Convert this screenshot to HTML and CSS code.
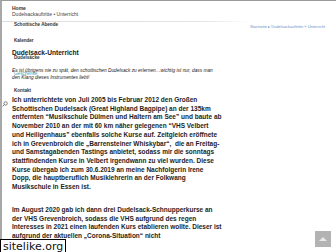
FILE: index.html
```html
<!DOCTYPE html>
<html lang="de">
<head>
  <meta charset="UTF-8">
  <meta name="viewport" content="width=device-width, initial-scale=1.0">
  <title>Dudelsack-Unterricht</title>
  <link rel="stylesheet" href="styles.css">
</head>
<body>
  <div class="site-head">
    <div class="home">Home</div>
    <div class="site-title">Dudelsackauftritte • Unterricht</div>
  </div>
  <div class="rule"></div>

  <ul class="menu">
    <li>Schottische Abende</li>
    <li>Kalender</li>
    <li>Dudelsäcke</li>
    <li class="teal">Geschenke</li>
    <li>Kontakt</li>
  </ul>

  <div class="crumbs">
    <span>Startseite</span> &#9656; <span>Dudelsackauftritte » Unterricht</span>
  </div>

  <div class="content">
    <h1>Dudelsack-Unterricht</h1>
    <p class="intro">Es ist übrigens nie zu spät, den schottischen Dudelsack zu erlernen…wichtig ist nur, dass man den Klang dieses Instrumentes liebt!</p>
    <p>Ich unterrichtete von Juli 2005 bis Februar 2012 den Großen Schottischen Dudelsack (Great Highland Bagpipe) an der 135km entfernten “Musikschule Dülmen und Haltern am See” und baute ab November 2010 an der mit 60 km näher gelegenen “VHS Velbert und Heiligenhaus” ebenfalls solche Kurse auf. Zeitgleich eröffnete ich in Grevenbroich die „Barrensteiner Whiskybar“,&nbsp; die an Freitag- und Samstagabenden Tastings anbietet, sodass mir die sonntags stattfindenden Kurse in Velbert irgendwann zu viel wurden. Diese Kurse übergab ich zum 30.6.2019 an meine Nachfolgerin Irene Dopp, die hauptberuflich Musiklehrerin an der Folkwang Musikschule in Essen ist.</p>
    <p>Im August 2020 gab ich dann drei Dudelsack-Schnupperkurse an der VHS Grevenbroich, sodass die VHS aufgrund des regen Interesses in 2021 einen laufenden Kurs etablieren wollte. Dieser ist aufgrund der aktuellen „Corona-Situation“ nicht</p>
  </div>

  <svg class="search" width="6" height="6" viewBox="0 0 6 6">
    <circle cx="3.6" cy="2.4" r="1.7" fill="none" stroke="#666" stroke-width="0.8"/>
    <path d="M2.4 3.6 L0.6 5.4" stroke="#666" stroke-width="0.9"/>
  </svg>

  <div class="to-top">
    <svg width="8" height="6" viewBox="0 0 8 6"><path d="M0 5 L4 1 L8 5 Z" fill="#e8e8e8"/></svg>
  </div>

  <div class="stamp">sitelike.org</div>
</body>
</html>
```

FILE: styles.css
```css
html, body {
  margin: 0;
  padding: 0;
  height: 100%;
  overflow: hidden;
}
body {
  background: #fff;
  border-top: 1px solid #9a9a9a;
  border-left: 2px solid #a8a8a8;
  box-sizing: border-box;
  font-family: "Liberation Sans", Arial, sans-serif;
  color: #222;
  position: relative;
}
.site-head {
  padding: 4px 10px 0;
}
.home {
  font-size: 5px;
  line-height: 6px;
  font-weight: bold;
  color: #333;
}
.site-title {
  font-size: 5px;
  line-height: 6px;
  color: #444;
}
.rule {
  margin-top: 4px;
  height: 1px;
  background: linear-gradient(to right, #dcdcdc 0%, #e4e4e4 60%, rgba(230, 230, 230, 0) 75%);
}
.menu {
  position: absolute;
  top: 21px;
  left: 12px;
  margin: 0;
  padding: 0;
  list-style: none;
}
.menu li {
  font-size: 4.6px;
  line-height: 6px;
  font-weight: bold;
  color: #333;
  margin-bottom: 10.4px;
}
.menu li.teal {
  color: #3fa3b5;
  font-weight: normal;
}
.crumbs {
  margin-top: 2px;
  padding-right: 11px;
  text-align: right;
  font-size: 4px;
  line-height: 5px;
  color: #6d8fc4;
}
.content {
  width: 210px;
  padding-left: 10px;
}
h1 {
  margin: 20px 0 0;
  font-size: 6.6px;
  line-height: 8px;
  font-weight: bold;
  color: #222;
}
.content p {
  margin: 14.3px 0 0;
  font-size: 6.5px;
  line-height: 8.7px;
  font-weight: bold;
  color: #1e1e1e;
}
.content p.intro {
  margin-top: 9.5px;
  font-size: 4.8px;
  line-height: 7.6px;
  font-style: italic;
  font-weight: normal;
  color: #222;
}
.search {
  position: absolute;
  left: 0;
  top: 100px;
}
.to-top {
  position: fixed;
  right: 5px;
  bottom: 5px;
  width: 16px;
  height: 16px;
  background: #b3b3b3;
  display: flex;
  align-items: center;
  justify-content: center;
}
.stamp {
  position: fixed;
  left: 0;
  bottom: -2px;
  padding: 0 2px;
  background: #fff;
  border: 1px solid #000;
  font-family: "DejaVu Sans", sans-serif;
  font-size: 11px;
  line-height: 13px;
  color: #111;
}
```
